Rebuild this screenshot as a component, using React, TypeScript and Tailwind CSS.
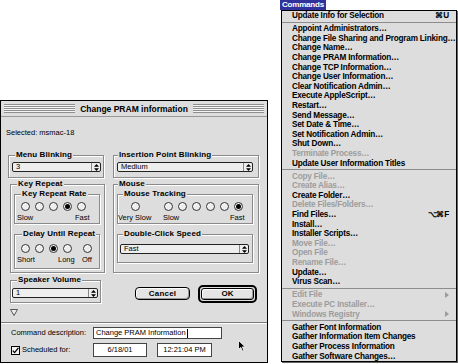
import type { ReactNode } from "react";

const BOLD = "font-bold text-[8px] tracking-[0.1px] text-black";
const SMALL = "text-[7.5px] text-black";

type Item = { t: string; off?: boolean; key?: string; sub?: boolean } | "sep";

const MENU: Item[] = [
  { t: "Update Info for Selection", key: "⌘U" },
  "sep",
  { t: "Appoint Administrators…" },
  { t: "Change File Sharing and Program Linking…" },
  { t: "Change Name…" },
  { t: "Change PRAM Information…" },
  { t: "Change TCP Information…" },
  { t: "Change User Information…" },
  { t: "Clear Notification Admin…" },
  { t: "Execute AppleScript…" },
  { t: "Restart…" },
  { t: "Send Message…" },
  { t: "Set Date & Time…" },
  { t: "Set Notification Admin…" },
  { t: "Shut Down…" },
  { t: "Terminate Process…", off: true },
  { t: "Update User Information Titles" },
  "sep",
  { t: "Copy File…", off: true },
  { t: "Create Alias…", off: true },
  { t: "Create Folder…" },
  { t: "Delete Files/Folders…", off: true },
  { t: "Find Files…", key: "⌥⌘F" },
  { t: "Install…" },
  { t: "Installer Scripts…" },
  { t: "Move File…", off: true },
  { t: "Open File", off: true },
  { t: "Rename File…", off: true },
  { t: "Update…" },
  { t: "Virus Scan…" },
  "sep",
  { t: "Edit File", off: true, sub: true },
  { t: "Execute PC Installer…", off: true },
  { t: "Windows Registry", off: true, sub: true },
  "sep",
  { t: "Gather Font Information" },
  { t: "Gather Information Item Changes" },
  { t: "Gather Process Information" },
  { t: "Gather Software Changes…" },
];

function GroupBox({
  label,
  className,
  labelClass,
  children,
}: {
  label: string;
  className: string;
  labelClass: string;
  children?: ReactNode;
}) {
  return (
    <div
      className={`flex flex-col border border-[#8a8a8a] shadow-[inset_1px_1px_0_#fff,1px_1px_0_#fff] ${className}`}
    >
      <span
        className={`-mt-[6px] h-[10px] self-start bg-[#dddddd] px-[1px] leading-[10px] ${BOLD} ${labelClass}`}
      >
        {label}
      </span>
      {children}
    </div>
  );
}

function Popup({ value, className }: { value: string; className: string }) {
  return (
    <div
      className={`flex h-[10px] items-stretch rounded-[2px] border border-[#222] bg-[#eeeeee] ${className}`}
    >
      <span className={`flex-1 pl-[3px] leading-[8px] ${SMALL}`}>{value}</span>
      <span className="flex w-[9px] items-center justify-center border-l border-[#888]">
        <svg width="5" height="7" viewBox="0 0 5 7">
          <path d="M2.5 0L5 2.8H0Z M2.5 7L0 4.2H5Z" fill="#000" />
        </svg>
      </span>
    </div>
  );
}

function Radio({ on, className = "" }: { on?: boolean; className?: string }) {
  return (
    <span
      className={`flex h-[9px] w-[9px] shrink-0 items-center justify-center rounded-full border border-[#333] bg-[#eeeeee] shadow-[inset_1px_1px_0_#fff] ${className}`}
    >
      {on && <span className="h-[5px] w-[5px] rounded-full bg-black" />}
    </span>
  );
}

function Dialog() {
  return (
    <div className="mt-[100px] flex h-[263px] w-[268px] flex-col overflow-hidden border border-black bg-[#dddddd]">
      {/* title bar */}
      <div className="flex h-[16px] items-center border-b border-[#999] px-[3px]">
        <div className="h-[9px] flex-1 bg-[repeating-linear-gradient(to_bottom,#8e8e8e_0,#8e8e8e_1px,#f4f4f4_1px,#f4f4f4_2px)]" />
        <span className="px-[5px] text-[8.5px] font-bold leading-[12px] text-black">
          Change PRAM information
        </span>
        <div className="h-[9px] flex-1 bg-[repeating-linear-gradient(to_bottom,#8e8e8e_0,#8e8e8e_1px,#f4f4f4_1px,#f4f4f4_2px)]" />
      </div>

      <p className={`ml-[5px] mt-[11px] h-[10px] leading-[10px] ${SMALL}`}>
        Selected: msmac-18
      </p>

      <div className="mt-[17px] flex">
        <GroupBox label="Menu Blinking" className="ml-[7px] h-[23px] w-[96px]" labelClass="ml-[6px]">
          <Popup value="3" className="ml-[3px] mr-[2px] mt-[2px]" />
        </GroupBox>
        <GroupBox
          label="Insertion Point Blinking"
          className="ml-[9px] h-[23px] w-[146px]"
          labelClass="ml-[4px]"
        >
          <Popup value="Medium" className="ml-[3px] mr-[5px] mt-[2px]" />
        </GroupBox>
      </div>

      <div className="mt-[6px] flex">
        <GroupBox label="Key Repeat" className="ml-[9px] h-[89px] w-[95px]" labelClass="ml-[6px]">
          <GroupBox label="Key Repeat Rate" className="ml-[3px] mt-[5px] h-[30px] w-[86px]" labelClass="ml-[6px]">
            <div className="ml-[5.5px] mt-[3px] flex gap-[5px]">
              <Radio />
              <Radio />
              <Radio />
              <Radio on />
              <Radio />
            </div>
            <div className={`ml-[2px] mt-[2px] flex h-[9px] leading-[9px] ${SMALL}`}>
              <span className="w-[58px]">Slow</span>
              <span>Fast</span>
            </div>
          </GroupBox>
          <GroupBox
            label="Delay Until Repeat"
            className="ml-[3px] mt-[10px] h-[35px] w-[86px]"
            labelClass="ml-[7px]"
          >
            <div className="ml-[5.5px] mt-[5px] flex gap-[5px]">
              <Radio />
              <Radio />
              <Radio on />
              <Radio />
              <Radio className="ml-[6px]" />
            </div>
            <div className={`ml-[2px] mt-[2px] flex h-[9px] leading-[9px] ${SMALL}`}>
              <span className="w-[41px]">Short</span>
              <span className="w-[24px]">Long</span>
              <span>Off</span>
            </div>
          </GroupBox>
        </GroupBox>

        <GroupBox label="Mouse" className="ml-[8px] h-[89px] w-[146px]" labelClass="ml-[4px]">
          <GroupBox label="Mouse Tracking" className="ml-[3px] mt-[5px] h-[30px] w-[136px]" labelClass="ml-[5px]">
            <div className="ml-[12.5px] mt-[3px] flex gap-[5px]">
              <Radio className="mr-[19px]" />
              <Radio />
              <Radio />
              <Radio />
              <Radio />
              <Radio />
              <Radio on />
            </div>
            <div className={`mt-[2px] flex h-[9px] leading-[9px] ${SMALL}`}>
              <span className="w-[45px]">Very Slow</span>
              <span className="w-[67px]">Slow</span>
              <span>Fast</span>
            </div>
          </GroupBox>
          <GroupBox
            label="Double-Click Speed"
            className="ml-[3px] mt-[10px] h-[29px] w-[136px]"
            labelClass="ml-[5px]"
          >
            <Popup value="Fast" className="ml-[2px] mr-[3px] mt-[5px]" />
          </GroupBox>
        </GroupBox>
      </div>

      <div className="mt-[7px] flex h-[23px] items-start">
        <GroupBox label="Speaker Volume" className="ml-[9px] h-[23px] w-[91px]" labelClass="ml-[6px]">
          <Popup value="1" className="ml-[1px] mr-[2px] mt-[3px]" />
        </GroupBox>
        <button className="ml-[34px] mt-[7px] flex h-[13px] w-[55px] items-center justify-center rounded-[4px] border border-black bg-[#e4e4e4] text-[8px] font-bold tracking-[0.2px] text-black shadow-[inset_1px_1px_0_#fff,inset_-1px_-1px_0_#999]">
          Cancel
        </button>
        <div className="ml-[8px] mt-[5px] flex h-[18px] w-[59px] items-center justify-center rounded-[5px] border-[2px] border-black p-[1px]">
          <button className="flex h-full w-full items-center justify-center rounded-[3px] border border-black bg-[#e4e4e4] text-[8px] font-bold text-black shadow-[inset_1px_1px_0_#fff,inset_-1px_-1px_0_#999]">
            OK
          </button>
        </div>
      </div>

      <svg className="ml-[9px] mt-[6px]" width="8" height="7" viewBox="0 0 8 7">
        <path d="M0.5 0.5H7.5L4 6.5Z" fill="#eeeeee" stroke="#555" strokeWidth="1" />
      </svg>

      <div className="mt-[6px] h-[2px] w-full border-t border-[#7a7a7a] bg-white" />

      <div className="mt-[3px] flex h-[12px] items-center">
        <span className={`ml-[10px] w-[82px] ${SMALL}`}>Command description:</span>
        <div className="flex h-[12px] w-[129px] items-center border border-[#444] bg-white pl-[2px]">
          <span className={`leading-[10px] ${SMALL}`}>Change PRAM Information</span>
          <span className="ml-px h-[9px] w-px bg-black" />
        </div>
      </div>

      <div className="mt-[4px] flex h-[14px] items-center">
        <div className="ml-[10px] flex w-[82px] items-center">
          <span className="flex h-[9px] w-[9px] items-center justify-center border border-black bg-[#f2f2f2]">
            <svg width="7" height="7" viewBox="0 0 7 7">
              <path d="M0.8 3.6L2.6 5.6L6.4 0.8" fill="none" stroke="#000" strokeWidth="1.3" />
            </svg>
          </span>
          <span className={`ml-[2px] ${SMALL}`}>Scheduled for:</span>
        </div>
        <div className={`flex h-[14px] w-[54px] items-center justify-center border border-[#444] bg-white ${SMALL}`}>
          6/18/01
        </div>
        <div className={`ml-[10px] flex h-[14px] w-[55px] items-center justify-center border border-[#444] bg-white ${SMALL}`}>
          12:21:04 PM
        </div>
      </div>
    </div>
  );
}

function CommandsMenu() {
  return (
    <div className="ml-[12px] flex flex-col">
      <div className="flex h-[10px] w-[46px] items-center justify-center bg-[#31319c] text-[8px] font-bold tracking-[-0.2px] text-white">
        Commands
      </div>
      <div className="ml-[1px] flex w-[176px] flex-col border border-black bg-[#dddddd] shadow-[1px_1px_0_#666]">
        {MENU.map((it, i) =>
          it === "sep" ? (
            <div key={i} className="flex h-[3.6px] flex-col justify-center">
              <div className="h-px bg-[#8c8c8c]" />
            </div>
          ) : (
            <div
              key={i}
              className={`flex h-[9.6px] items-center justify-between pl-[10px] pr-[7px] text-[8.2px] font-bold leading-[9.6px] tracking-[-0.2px] ${
                it.off ? "text-[#9c9c9c]" : "text-black"
              }`}
            >
              <span className="whitespace-nowrap">{it.t}</span>
              {it.key && <span className="text-black">{it.key}</span>}
              {it.sub && (
                <svg width="4" height="6" viewBox="0 0 4 6">
                  <path d="M0 0L4 3L0 6Z" fill="#9c9c9c" />
                </svg>
              )}
            </div>
          )
        )}
      </div>
    </div>
  );
}

export default function App() {
  return (
    <div className="relative flex h-[364px] w-[458px] items-start overflow-hidden bg-white font-['Liberation_Sans',Arial,sans-serif]">
      <Dialog />
      <CommandsMenu />
      {/* mouse pointer */}
      <svg className="absolute left-[238px] top-[340px]" width="8" height="12" viewBox="0 0 8 12">
        <path d="M0.5 0.5V9.5L2.8 7.4L4.6 11.2L6 10.5L4.3 6.9H7.3Z" fill="#000" stroke="#fff" strokeWidth="0.8" />
      </svg>
    </div>
  );
}
